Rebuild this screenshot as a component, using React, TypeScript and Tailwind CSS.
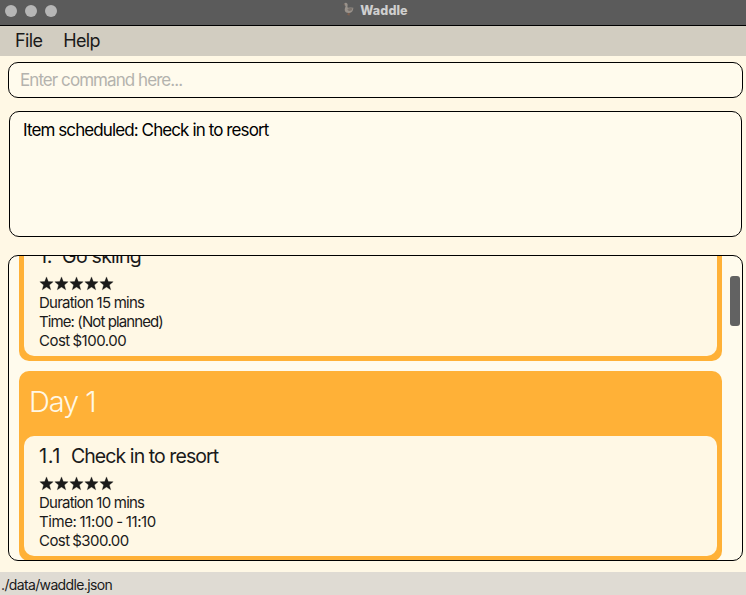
import React from "react";

type Line = { text: string; tracking: string };

type Item = {
  index: string;
  indexStyle: string;
  name: string;
  nameStyle: string;
  lines: Line[];
};

function Duck() {
  return (
    <svg viewBox="0 0 12 15" className="h-[15px] w-3">
      <path d="M2.2 1.8 Q3 0.6 4.6 0.9 Q6 1.4 5.6 3.4 Q5.2 4.8 5.8 5.8 Q8.4 5 11.4 5.8 Q11 10.6 7.4 11 Q3 11.3 2.7 8 Q2.7 6.4 3.6 4.6 Q3.4 3.4 2.2 3 Z" fill="#99928b" />
      <path d="M5.4 7 Q8 5.6 10.8 6.4 Q9.6 9.4 7 9 Q5.6 8.6 5.4 7Z" fill="#7b736d" />
      <path d="M0.6 2.9 L2.4 1.7 L2.8 3.1 Z" fill="#6f6057" />
      <path d="M6 11 L5.2 13 L7.6 13.4 L7.6 11 Z" fill="#80604f" />
    </svg>
  );
}

function Stars() {
  return (
    <div className="flex h-[19px] items-center">
      {[0, 1, 2, 3, 4].map((n) => (
        <svg key={n} viewBox="0 0 15 15" className="h-[15px] w-[15px]">
          <path d="M7.5 0.9 L9.3 5.5 L14.2 5.8 L10.4 8.9 L11.7 13.8 L7.5 11.1 L3.3 13.8 L4.6 8.9 L0.8 5.8 L5.7 5.5 Z" fill="#1a1a1a" stroke="#1a1a1a" strokeWidth="0.3" />
        </svg>
      ))}
    </div>
  );
}

function ItemCard({ item }: { item: Item }) {
  return (
    <div className="h-[120px] rounded-[10px] bg-[#fff8e5] pl-[15px] pt-[6px] text-[15px] leading-[19px] text-[#1a1a1a]">
      <div className="flex h-[28px] items-center gap-[10px] text-[20px]">
        <span className={item.indexStyle}>{item.index}</span>
        <span className={item.nameStyle}>{item.name}</span>
      </div>
      <div className="pt-[4px]">
        <Stars />
      </div>
      {item.lines.map((line) => (
        <div key={line.text} className={line.tracking}>
          {line.text}
        </div>
      ))}
    </div>
  );
}

const skiing: Item = {
  index: "1.",
  indexStyle: "tracking-[-0.4px]",
  name: "Go skiing",
  nameStyle: "text-[19.5px] tracking-[-0.75px]",
  lines: [
    { text: "Duration 15 mins", tracking: "tracking-[-0.76px]" },
    { text: "Time: (Not planned)", tracking: "tracking-[-0.9px]" },
    { text: "Cost $100.00", tracking: "tracking-[-0.5px] [word-spacing:-1px]" },
  ],
};

const checkIn: Item = {
  index: "1.1",
  indexStyle: "tracking-[0.55px]",
  name: "Check in to resort",
  nameStyle: "text-[19.5px] tracking-[-0.93px]",
  lines: [
    { text: "Duration 10 mins", tracking: "tracking-[-0.78px]" },
    { text: "Time: 11:00 - 11:10", tracking: "tracking-[-0.42px] [word-spacing:-0.6px]" },
    { text: "Cost $300.00", tracking: "tracking-[-0.55px] [word-spacing:-1px]" },
  ],
};

export default function App() {
  return (
    <div className="flex h-[595px] w-[746px] flex-col overflow-hidden bg-[#fff8e5] font-['Inter',sans-serif]">
      <header className="grid h-[26px] shrink-0 grid-cols-[1fr_auto_1fr] border-b border-black bg-[#5b5b5b]">
        <div className="flex gap-2 pl-[5px] pt-[5px]">
          <span className="h-3 w-3 rounded-full bg-[#b6b6b6]" />
          <span className="h-3 w-3 rounded-full bg-[#b6b6b6]" />
          <span className="h-3 w-3 rounded-full bg-[#b6b6b6]" />
        </div>
        <div className="flex gap-[6px] pl-1 pt-[2px]">
          <Duck />
          <span className="pt-px text-[12.5px] font-extrabold leading-4 tracking-[0.1px] text-[#cfcfcf]">Waddle</span>
        </div>
      </header>
      <nav className="flex h-[30px] shrink-0 items-center gap-[21px] bg-[#d2cdc1] pb-[2px] pl-[15px] text-[18px] tracking-[-0.65px] text-[#1a1a1a]">
        <span>File</span>
        <span>Help</span>
      </nav>
      <main className="flex flex-1 flex-col px-2 pt-[6px]">
        <div className="flex h-9 w-[735px] shrink-0 items-center rounded-[10px] border border-black bg-[#fffbed] pl-[11px] pt-[2px] text-[17px] tracking-[-0.94px] text-[#b4b3ae]">
          Enter command here...
        </div>
        <div className="ml-px mt-[13px] h-[126px] w-[733px] shrink-0 rounded-[10px] border border-black bg-[#fffbed] pl-[13px] pt-[8px] text-[17px] leading-5 tracking-[-0.9px] text-black">
          Item scheduled: Check in to resort
        </div>
        <div className="mt-[18px] flex h-[306px] w-[735px] shrink-0 items-start overflow-hidden rounded-[10px] border border-black bg-[#fffbed] pl-[10px]">
          <div className="flex w-[703px] flex-col gap-[10px]">
            <section className="-mt-[20px] h-[125px] rounded-b-[10px] bg-[#ffb137] px-[5px] pb-[5px]">
              <ItemCard item={skiing} />
            </section>
            <section className="h-[190px] rounded-[10px] bg-[#ffb137] px-[5px] pb-[5px]">
              <h2 className="h-[65px] pl-[5px] pt-[12px] text-[29px] font-[350] leading-[38px] tracking-[-1.1px] text-[#fff8e5]">Day 1</h2>
              <ItemCard item={checkIn} />
            </section>
          </div>
          <div className="ml-[8px] mt-[20px] h-[50px] w-[10px] rounded-[3px] bg-[#626262]" />
        </div>
      </main>
      <footer className="h-[23px] shrink-0 bg-[#dfdbd3] pl-[1px] pt-[3px] text-[14px] leading-5 tracking-[-0.64px] text-[#1a1a1a]">
        ./data/waddle.json
      </footer>
    </div>
  );
}
